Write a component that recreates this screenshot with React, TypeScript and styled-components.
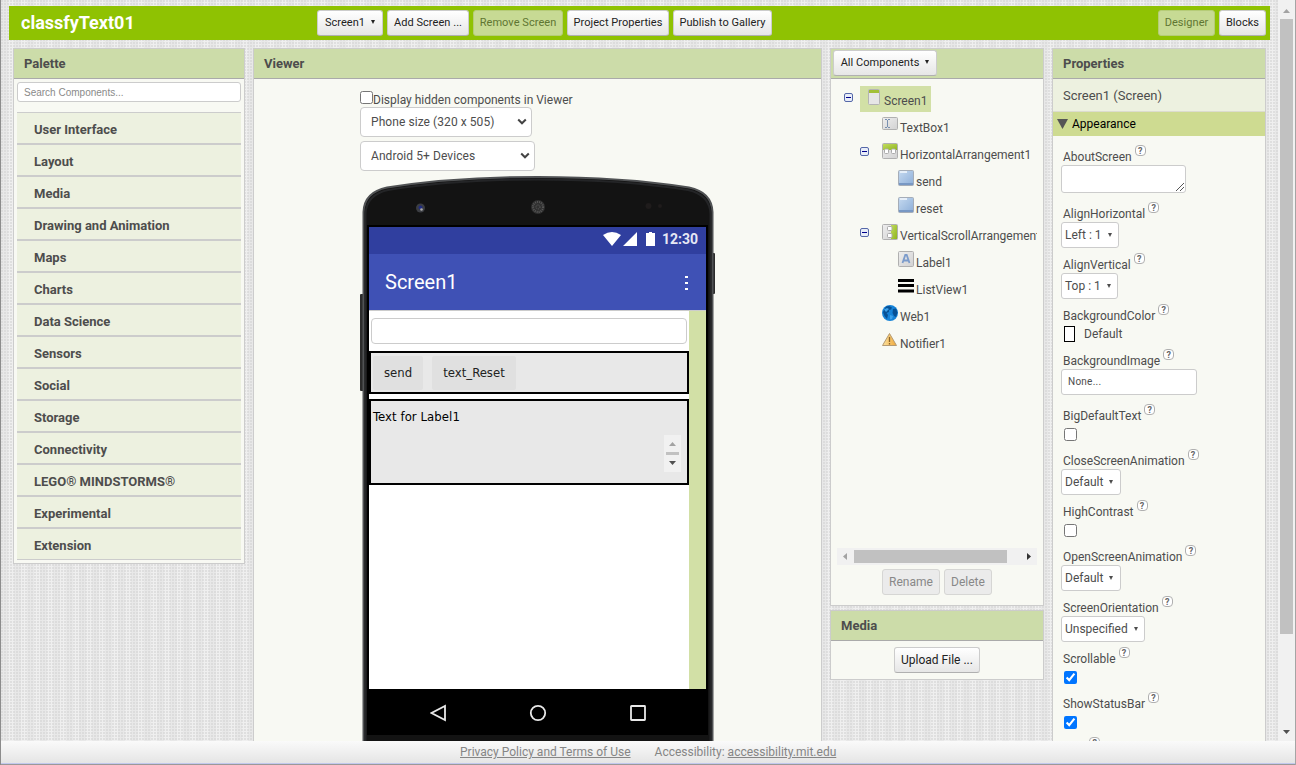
import React from 'react';
import styled, { createGlobalStyle, css } from 'styled-components';

const GlobalStyle = createGlobalStyle`
  * { box-sizing: border-box; }
  body {
    margin: 0;
    overflow: hidden;
    font-family: Roboto, "Liberation Sans", sans-serif;
    font-size: 12px;
    color: #4d4d4d;
  }
`;

const Page = styled.div`
  width: 1296px;
  height: 765px;
  display: flex;
  flex-direction: column;
  border-left: 1px solid #8c8c8c;
  border-right: 1px solid #a5a5a5;
  overflow: hidden;
`;

const Main = styled.div`
  height: 741px;
  display: flex;
  flex: none;
`;

const Workspace = styled.div`
  width: 1277px;
  padding: 6px 8px 0;
  overflow: hidden;
  background-color: #ececec;
  background-image:
    radial-gradient(circle at 1px 1px, #d4d4d4 0.5px, transparent 1px),
    repeating-linear-gradient(90deg, #e8e8e8 0 7px, #efefef 7px 13px);
  background-size: 3px 3px, auto;
`;

const TopBar = styled.header`
  height: 34px;
  background: #8fc202;
  display: flex;
  align-items: center;
  padding: 0 4px 0 12px;
`;

const ProjectName = styled.h1`
  margin: 0;
  width: 296px;
  font-size: 18px;
  font-weight: 700;
  line-height: 32px;
  color: #fff;
`;

const ButtonGroup = styled.div<{ $end?: boolean }>`
  display: flex;
  gap: 4px;
  margin-left: ${p => (p.$end ? 'auto' : '0')};
`;

const Button = styled.button<{ $w: number; $look?: 'pressed' | 'disabled'; $large?: boolean }>`
  width: ${p => p.$w}px;
  height: 26px;
  padding: 0 0 1px;
  flex: none;
  font: ${p => (p.$large ? '12px' : '11px')} Roboto, sans-serif;
  letter-spacing: ${p => (p.$large ? '0' : '0.05px')};
  white-space: nowrap;
  color: #222;
  border: 1px solid #ccc;
  border-bottom-color: #b0b0b0;
  border-radius: 3px;
  background: linear-gradient(#fff, #e6e6e6);
  ${p => p.$look === 'pressed' && css`
    color: #5f7632;
    background: #c7da94;
    border-color: #b5cc77;
  `}
  ${p => p.$look === 'disabled' && css`
    color: #888;
    background: #ebebeb;
    border-color: #d6d6d4;
  `}
`;

const Caret = styled.span`
  display: inline-block;
  margin-left: 6px;
  border: 2.5px solid transparent;
  border-top: 4px solid currentColor;
  border-bottom: 0;
  vertical-align: 2px;
`;

const Columns = styled.div`
  display: flex;
  align-items: flex-start;
  gap: 8px;
  padding: 8px 4px 0;
`;

const Stack = styled.div`
  display: flex;
  flex-direction: column;
  gap: 4px;
`;

const Panel = styled.section<{ $w: number; $h: number }>`
  width: ${p => p.$w}px;
  height: ${p => p.$h}px;
  flex: none;
  border: 1px solid #ccc;
  background: #f8f9f3;
  overflow: hidden;
`;

const PanelTitle = styled.h2<{ $bare?: boolean }>`
  margin: 0;
  display: flex;
  align-items: flex-start;
  height: 30px;
  padding: ${p => (p.$bare ? '1px 2px' : '0 10px')};
  line-height: 29px;
  font-size: 13px;
  font-weight: 700;
  color: #4d4d4d;
  background: #ccdca9;
  border-bottom: 1px solid #aaa;
`;

const Search = styled.input`
  display: block;
  width: 224px;
  height: 20px;
  margin: 3px 3px 10px;
  padding: 0 6px;
  font: 10px "Liberation Sans", sans-serif;
  border: 1px solid #ccc;
  border-radius: 3px;
  &::placeholder { color: #8a8a8a; }
`;

const Drawer = styled.div`
  width: 224px;
  height: 32px;
  margin-left: 3px;
  padding: 2px 0 0 17px;
  line-height: 29px;
  font-size: 13px;
  font-weight: 700;
  background: #edf1e0;
  border-top: 1px solid #ccc;
  border-bottom: 1px solid #ccc;
`;

const ViewerBody = styled.div`
  padding: 12px 0 0 106px;
`;

const HiddenToggle = styled.label`
  display: flex;
  height: 16px;
  line-height: 19px;
`;

const Check = styled.input`
  width: 13px;
  height: 13px;
  margin: 0;
  flex: none;
`;

const SizeSelect = styled.div<{ $w: number; $gap: number }>`
  width: ${p => p.$w}px;
  height: 30px;
  margin-bottom: ${p => p.$gap}px;
  padding: 0 4px 1px 10px;
  display: flex;
  align-items: center;
  justify-content: space-between;
  letter-spacing: 0.07px;
  background: #fff;
  border: 1px solid #ccc;
  border-radius: 4px;
`;

const Phone = styled.div`
  position: relative;
  width: 356px;
  height: 570px;
  padding: 51px 10px 0 9px;
`;

const PhoneCase = styled.svg`
  position: absolute;
  left: 0;
  top: 0;
`;

const Screen = styled.div`
  position: relative;
  width: 337px;
`;

const StatusBar = styled.div`
  height: 27px;
  padding: 0 8px 3px 0;
  display: flex;
  align-items: center;
  justify-content: flex-end;
  background: #303f9f;
  color: #e6e8f5;
  font-size: 14px;
  font-weight: 700;
`;

const StatusIcons = styled.svg`
  margin-right: 6px;
`;

const AppBar = styled.div`
  height: 56px;
  padding: 0 16px;
  display: flex;
  align-items: center;
  justify-content: space-between;
  background: #3f51b5;
  color: #fff;
  font-size: 20px;
  svg { margin-top: 2px; }
`;

const Form = styled.div`
  height: 379px;
  padding: 7px 17px 0 0;
  border-top: 1px solid #ccc;
  background: linear-gradient(90deg, #fff 320px, #d2e0a6 320px);
  font-family: "DejaVu Sans Condensed", "DejaVu Sans", sans-serif;
  font-stretch: condensed;
  font-size: 13px;
  color: #000;
`;

const MockInput = styled.div`
  height: 26px;
  margin: 0 2px 7px;
  border: 1px solid #ccc;
  border-radius: 4px;
`;

const Arrangement = styled.div<{ $h: number }>`
  height: ${p => p.$h}px;
  margin-bottom: 5px;
  padding: 3px 0 2px 2px;
  display: flex;
  background: #e8e8e8;
  border: 2px solid #000;
`;

const MockButton = styled.div<{ $w: number }>`
  width: ${p => p.$w}px;
  height: 34px;
  margin-right: 9px;
  line-height: 33px;
  text-align: center;
  color: #222;
  background: #e0e0e0;
  border-radius: 2px;
`;

const MockLabel = styled.div`
  flex: 1;
  padding-top: 5px;
  letter-spacing: 0.07px;
`;

const MiniScroll = styled.svg`
  margin: 31px 6px 0 0;
`;

const NavBar = styled.div`
  height: 48px;
  display: flex;
  justify-content: center;
  align-items: center;
`;

const Tree = styled.div`
  height: 469px;
  margin: 0 6px;
  padding-top: 7px;
  overflow: hidden;
`;

const TreeRow = styled.div<{ $level: number }>`
  height: 27px;
  display: flex;
  padding-left: ${p => 7 + p.$level * 16}px;
`;

const TreeToggle = styled.div`
  width: 16px;
  padding-top: 7px;
  flex: none;
`;

const TreeItem = styled.div<{ $on?: boolean }>`
  height: 26px;
  display: flex;
  gap: 2px;
  padding: 3px 4px 0 6px;
  line-height: 25px;
  white-space: nowrap;
  background: ${p => (p.$on ? '#d2e0a6' : 'transparent')};
  svg { flex: none; }
`;

const HScroll = styled.div`
  width: 200px;
  height: 17px;
  margin: 0 6px 4px;
  display: flex;
  align-items: center;
  background: #f1f1f1;
  svg { flex: none; }
`;

const HThumb = styled.div`
  width: 153px;
  height: 13px;
  margin-right: auto;
  background: #c1c1c1;
`;

const CenterRow = styled.div`
  display: flex;
  justify-content: center;
  gap: 4px;
`;

const UploadArea = styled(CenterRow)`
  padding-top: 6px;
`;

const Selected = styled.div`
  height: 33px;
  padding-left: 10px;
  line-height: 34px;
  font-size: 13px;
  background: #edf1e0;
  border-bottom: 1px solid #dcdccf;
`;

const Category = styled.div`
  height: 24px;
  display: flex;
  align-items: center;
  gap: 4px;
  padding-left: 4px;
  margin-bottom: 8px;
  background: #cedb91;
  color: #000;
`;

const Property = styled.div<{ $h: number }>`
  height: ${p => p.$h}px;
  padding-left: 8px;
`;

const PropertyName = styled.div`
  height: 21px;
  padding-left: 2px;
  display: flex;
  gap: 3px;
  line-height: 27px;
`;

const Help = styled.span`
  width: 11px;
  height: 11px;
  margin-top: 1px;
  border: 1px solid #b0b0b0;
  border-radius: 4px;
  background: #fff;
  text-align: center;
  font: bold 9px/10px Roboto, sans-serif;
  color: #666;
`;

const Picker = styled.div<{ $w: number }>`
  width: ${p => p.$w}px;
  height: 26px;
  padding-left: 3px;
  line-height: 25px;
  white-space: nowrap;
  background: #fff;
  border: 1px solid #ccc;
  border-radius: 3px;
`;

const AssetBox = styled(Picker)`
  padding-left: 6px;
  line-height: 24px;
  font-size: 10px;
  letter-spacing: 0.25px;
`;

const TextArea = styled.div`
  width: 125px;
  height: 28px;
  display: flex;
  justify-content: flex-end;
  align-items: flex-end;
  background: #fff;
  border: 1px solid #ccc;
  border-radius: 3px;
`;

const ColorRow = styled.div`
  display: flex;
  gap: 9px;
  padding: 2px 3px;
  line-height: 16px;
`;

const Swatch = styled.span`
  width: 11px;
  height: 16px;
  background: #fff;
  border: 1px solid #000;
`;

const PropertyCheck = styled(Check)`
  display: block;
  margin: 4px 3px;
`;

const VScroll = styled.div`
  width: 17px;
  height: 741px;
  padding: 4px 2px 5px;
  display: flex;
  flex-direction: column;
  align-items: center;
  background: #f1f1f1;
`;

const VThumb = styled.div`
  width: 13px;
  height: 615px;
  margin: 0 0 auto;
  background: #c1c1c1;
`;

const Footer = styled.footer`
  height: 24px;
  padding-left: 459px;
  display: flex;
  gap: 24px;
  line-height: 23px;
  color: #858585;
  background: linear-gradient(#fafafa, #e4e4e4);
  border-bottom: 1px solid #999;
  box-shadow: inset 0 -1px 0 #c2c8ee;
  a { color: inherit; text-decoration: underline; }
`;

const DRAWERS = [
  'User Interface', 'Layout', 'Media', 'Drawing and Animation', 'Maps', 'Charts', 'Data Science',
  'Sensors', 'Social', 'Storage', 'Connectivity', 'LEGO® MINDSTORMS®', 'Experimental', 'Extension',
];

type IconName = 'screen' | 'textbox' | 'horizontal' | 'button' | 'vertical' | 'label' | 'list' | 'web' | 'notifier';

const NODES: { name: string; icon: IconName; level: number; open?: boolean }[] = [
  { name: 'Screen1', icon: 'screen', level: 0, open: true },
  { name: 'TextBox1', icon: 'textbox', level: 1 },
  { name: 'HorizontalArrangement1', icon: 'horizontal', level: 1, open: true },
  { name: 'send', icon: 'button', level: 2 },
  { name: 'reset', icon: 'button', level: 2 },
  { name: 'VerticalScrollArrangement1', icon: 'vertical', level: 1, open: true },
  { name: 'Label1', icon: 'label', level: 2 },
  { name: 'ListView1', icon: 'list', level: 2 },
  { name: 'Web1', icon: 'web', level: 1 },
  { name: 'Notifier1', icon: 'notifier', level: 1 },
];

type Prop = { name: string; h: number; kind: 'area' | 'pick' | 'color' | 'asset' | 'check'; value?: string; w?: number; on?: boolean };

const PROPS: Prop[] = [
  { name: 'AboutScreen', h: 57, kind: 'area' },
  { name: 'AlignHorizontal', h: 51, kind: 'pick', value: 'Left : 1', w: 58 },
  { name: 'AlignVertical', h: 51, kind: 'pick', value: 'Top : 1', w: 57 },
  { name: 'BackgroundColor', h: 45, kind: 'color', value: 'Default' },
  { name: 'BackgroundImage', h: 55, kind: 'asset', value: 'None...', w: 136 },
  { name: 'BigDefaultText', h: 45, kind: 'check' },
  { name: 'CloseScreenAnimation', h: 51, kind: 'pick', value: 'Default', w: 60 },
  { name: 'HighContrast', h: 45, kind: 'check' },
  { name: 'OpenScreenAnimation', h: 51, kind: 'pick', value: 'Default', w: 60 },
  { name: 'ScreenOrientation', h: 51, kind: 'pick', value: 'Unspecified', w: 84 },
  { name: 'Scrollable', h: 45, kind: 'check', on: true },
  { name: 'ShowStatusBar', h: 45, kind: 'check', on: true },
  { name: 'Title', h: 45, kind: 'area' },
];

function Icon({ name }: { name: IconName }) {
  const frame = { x: 0.5, y: 1.5, width: 15, height: 13, rx: 1, stroke: '#b0b0b0', fill: 'url(#grey)' };
  return (
    <svg width="16" height="16" viewBox="0 0 16 16">
      <defs>
        <linearGradient id="grey" x1="0" y1="0" x2="1" y2="1">
          <stop offset="0" stopColor="#eee" /><stop offset="1" stopColor="#d2d2d2" />
        </linearGradient>
        <linearGradient id="green" x1="0" y1="0" x2="1" y2="1">
          <stop offset="0" stopColor="#c2dc5e" /><stop offset="1" stopColor="#8fb51e" />
        </linearGradient>
        <linearGradient id="blue" x1="0" y1="0" x2="1" y2="1">
          <stop offset="0" stopColor="#c6daf0" /><stop offset="1" stopColor="#8caed8" />
        </linearGradient>
        <linearGradient id="amber" x1="0" x2="1">
          <stop offset="0" stopColor="#fbe3a0" /><stop offset="1" stopColor="#f0a738" />
        </linearGradient>
      </defs>
      {name === 'screen' && <>
        <rect x="2.5" y="0.5" width="11" height="15" rx="1" fill="#e6e6e6" stroke="#b4b4b4" />
        <path d="M3 1h10v3H3z" fill="#a2c037" />
      </>}
      {name === 'textbox' && <>
        <rect {...frame} height={12} />
        <path d="M3 3.5h2m1 0h2M5.5 4v7M3 11.5h2m1 0h2" stroke="#7890b0" fill="none" />
      </>}
      {name === 'horizontal' && <>
        <rect {...frame} y={0.5} height={15} />
        <path d="M1 1h14v6H1z" fill="url(#green)" />
        <rect x="2.5" y="6" width="4" height="4.5" rx="1" fill="#fff" stroke="#aaa" />
        <rect x="9.5" y="6" width="4" height="4.5" rx="1" fill="#fff" stroke="#aaa" />
      </>}
      {name === 'vertical' && <>
        <rect {...frame} y={0.5} height={15} />
        <path d="M9 1h6v14H9z" fill="url(#green)" />
        <rect x="5.5" y="2.5" width="4.5" height="4" rx="1" fill="#fff" stroke="#aaa" />
        <rect x="5.5" y="9.5" width="4.5" height="4" rx="1" fill="#fff" stroke="#aaa" />
      </>}
      {name === 'button' && <>
        <rect x="0.5" y="0.5" width="15" height="15" rx="1" fill="url(#blue)" stroke="#a5adb8" />
        <path d="M2 1h7v2H2z" fill="#e6eff9" />
        <path d="M1 14h14" stroke="#7898c4" strokeWidth="2" />
      </>}
      {name === 'label' && <>
        <rect {...frame} y={0.5} height={15} />
        <path d="M4.5 12 7.3 4h1.4l2.8 8M5.5 9.5h5" fill="none" stroke="#7b9bcb" strokeWidth="1.8" />
      </>}
      {name === 'list' && <path d="M0 2.5h16M0 7.5h16M0 13h16" stroke="#000" strokeWidth="3" />}
      {name === 'web' && <>
        <circle cx="8" cy="8" r="8" fill="#1683d8" />
        <path d="M4 1.5 7 1l3 1.5-1 2-2 .5v2L4.5 8 6 10l-1 4-2.5-3L1 7z" fill="#075195" />
        <path d="m11 4 3-.5 1.5 4L14 12l-2-1-1.500-3z" fill="#075195" />
        <path d="M2 4.500 5 3l2 1-3 3zM8 10l3 1-1 3-2 .5z" fill="#3da2ea" />
      </>}
      {name === 'notifier' && <>
        <path d="M7.500 1.500 14.500 13.500H.5z" fill="url(#amber)" stroke="#b49a72" strokeLinejoin="round" />
        <path d="M7.500 5v5M7.500 11v1.500" stroke="#8a6327" strokeWidth="1.300" />
      </>}
    </svg>
  );
}

const ToggleBox = styled.svg`
  display: block;
`;

function Toggle() {
  return (
    <ToggleBox width="9" height="9" viewBox="0 0 9 9">
      <rect x="0.5" y="0.5" width="8" height="8" rx="1.5" fill="#e8edf8" stroke="#5568a8" />
      <path d="M2 4.500h5" stroke="#00008b" />
    </ToggleBox>
  );
}

function Chevron() {
  return (
    <svg width="10" height="7" viewBox="0 0 10 7">
      <path d="m1.200 1.500 3.800 3.800 3.800-3.800" fill="none" stroke="#444" strokeWidth="2" />
    </svg>
  );
}

function Case() {
  return (
    <PhoneCase width="356" height="570" viewBox="0 0 356 570">
      <rect x="0" y="118" width="5" height="97" rx="1" fill="#2b2b2b" />
      <rect x="350" y="77" width="5" height="41" rx="1" fill="#2b2b2b" />
      <path d="M3.500 570V36C4 24 10 15 27 11.500C72 4.500 120 1 178 1C236 1 285 4.500 329 11.500C346 15 352 24 352.500 36V570" fill="#131313" stroke="#505254" strokeWidth="2" />
      <path d="M5.500 570V38C6 26 12 17.500 28 14C72 7 120 3.500 178 3.500C236 3.500 284 7 328 14C344 17.500 350 26 350.500 38V570" fill="none" stroke="#242527" strokeWidth="2" />
      <rect x="7" y="49" width="341" height="510" fill="#000" />
      <circle cx="60.500" cy="32" r="4.500" fill="#3b3d42" />
      <circle cx="60.500" cy="31.500" r="2" fill="#202c80" />
      <circle cx="61.500" cy="33.500" r="1.300" fill="#aaa" />
      <circle cx="178" cy="31" r="7" fill="#303030" />
      <circle cx="178" cy="31" r="5" fill="none" stroke="#575757" strokeWidth="2" strokeDasharray="1 1" />
      <circle cx="178" cy="31" r="2" fill="none" stroke="#606060" strokeDasharray="1 1" />
      <circle cx="288.500" cy="30" r="3" fill="#1f1c1c" />
      <circle cx="300" cy="30" r="2" fill="#1f1c1c" />
    </PhoneCase>
  );
}

function Editor({ prop }: { prop: Prop }) {
  switch (prop.kind) {
    case 'area':
      return (
        <TextArea>
          <svg width="10" height="10" viewBox="0 0 10 10"><path d="M1 9 9 1M5 9l4-4" stroke="#555" /></svg>
        </TextArea>
      );
    case 'color':
      return <ColorRow><Swatch />{prop.value}</ColorRow>;
    case 'asset':
      return <AssetBox $w={prop.w!}>{prop.value}</AssetBox>;
    case 'check':
      return <PropertyCheck type="checkbox" defaultChecked={prop.on} />;
    default:
      return <Picker $w={prop.w!}>{prop.value}<Caret /></Picker>;
  }
}

export default function App() {
  return (
    <Page>
      <GlobalStyle />
      <Main>
        <Workspace>
          <TopBar>
            <ProjectName>classfyText01</ProjectName>
            <ButtonGroup>
              <Button $w={66}>Screen1<Caret /></Button>
              <Button $w={82}>Add Screen ...</Button>
              <Button $w={90} $look="pressed">Remove Screen</Button>
              <Button $w={102}>Project Properties</Button>
              <Button $w={99}>Publish to Gallery</Button>
            </ButtonGroup>
            <ButtonGroup $end>
              <Button $w={57} $look="pressed">Designer</Button>
              <Button $w={47}>Blocks</Button>
            </ButtonGroup>
          </TopBar>
          <Columns>
            <Panel $w={232} $h={516}>
              <PanelTitle>Palette</PanelTitle>
              <Search placeholder="Search Components..." />
              {DRAWERS.map(d => <Drawer key={d}>{d}</Drawer>)}
            </Panel>
            <Panel $w={569} $h={710}>
              <PanelTitle>Viewer</PanelTitle>
              <ViewerBody>
                <HiddenToggle><Check type="checkbox" />Display hidden components in Viewer</HiddenToggle>
                <SizeSelect $w={172} $gap={4}>Phone size (320 x 505)<Chevron /></SizeSelect>
                <SizeSelect $w={175} $gap={5}>Android 5+ Devices<Chevron /></SizeSelect>
                <Phone>
                  <Case />
                  <Screen>
                    <StatusBar>
                      <StatusIcons width="53" height="14" viewBox="0 0 53 14">
                        <path d="M0 3Q9-3 18 3L9 14zM20 14 34 0v14zM43 1h3V0h3v1h3v13h-9z" fill="#fff" />
                      </StatusIcons>
                      12:30
                    </StatusBar>
                    <AppBar>
                      Screen1
                      <svg width="7" height="16" viewBox="0 0 7 16"><path d="M2 1h3v2H2zM2 7h3v2H2zM2 13h3v2H2z" fill="#fff" /></svg>
                    </AppBar>
                    <Form>
                      <MockInput />
                      <Arrangement $h={43}>
                        <MockButton $w={50}>send</MockButton>
                        <MockButton $w={84}>text_Reset</MockButton>
                      </Arrangement>
                      <Arrangement $h={86}>
                        <MockLabel>Text for Label1</MockLabel>
                        <MiniScroll width="17" height="37" viewBox="0 0 17 37">
                          <path d="M0 0h17v37H0z" fill="#f1f1f1" />
                          <path d="m5 11 3.500-4 3.500 4z" fill="#a3a3a3" />
                          <path d="M2 17h13v3H2z" fill="#c1c1c1" />
                          <path d="m5 26 3.500 4 3.500-4z" fill="#505050" />
                        </MiniScroll>
                      </Arrangement>
                    </Form>
                    <NavBar>
                      <svg width="216" height="18" viewBox="0 0 216 18" fill="none" stroke="#e8e8e8" strokeWidth="1.800">
                        <path d="M15 2v14L1.500 9z" />
                        <circle cx="108" cy="9" r="7.200" />
                        <rect x="201" y="2" width="14" height="14" rx="0.500" />
                      </svg>
                    </NavBar>
                  </Screen>
                </Phone>
              </ViewerBody>
            </Panel>
            <Stack>
              <Panel $w={214} $h={558}>
                <PanelTitle $bare><Button $w={104}>All Components<Caret /></Button></PanelTitle>
                <Tree>
                  {NODES.map(n => (
                    <TreeRow key={n.name} $level={n.level}>
                      <TreeToggle>{n.open && <Toggle />}</TreeToggle>
                      <TreeItem $on={n.level === 0}><Icon name={n.icon} />{n.name}</TreeItem>
                    </TreeRow>
                  ))}
                </Tree>
                <HScroll>
                  <svg width="17" height="17" viewBox="0 0 17 17"><path d="M10 5v7L6 8.500z" fill="#a3a3a3" /></svg>
                  <HThumb />
                  <svg width="17" height="17" viewBox="0 0 17 17"><path d="M7 5v7l4-3.500z" fill="#333" /></svg>
                </HScroll>
                <CenterRow>
                  <Button $w={58} $large $look="disabled">Rename</Button>
                  <Button $w={48} $large $look="disabled">Delete</Button>
                </CenterRow>
              </Panel>
              <Panel $w={214} $h={70}>
                <PanelTitle>Media</PanelTitle>
                <UploadArea><Button $w={86} $large>Upload File ...</Button></UploadArea>
              </Panel>
            </Stack>
            <Panel $w={214} $h={710}>
              <PanelTitle>Properties</PanelTitle>
              <Selected>Screen1 (Screen)</Selected>
              <Category>
                <svg width="11" height="10" viewBox="0 0 11 10"><path d="M0 0h11L5.500 10z" fill="#555" /></svg>
                Appearance
              </Category>
              {PROPS.map(p => (
                <Property key={p.name} $h={p.h}>
                  <PropertyName>{p.name}<Help>?</Help></PropertyName>
                  <Editor prop={p} />
                </Property>
              ))}
            </Panel>
          </Columns>
        </Workspace>
        <VScroll>
          <svg width="13" height="15" viewBox="0 0 13 15"><path d="m3 9 3.500-4L10 9z" fill="#a3a3a3" /></svg>
          <VThumb />
          <svg width="13" height="9" viewBox="0 0 13 9"><path d="m3 3 3.500 4L10 3z" fill="#505050" /></svg>
        </VScroll>
      </Main>
      <Footer>
        <a>Privacy Policy and Terms of Use</a>
        <span>Accessibility: <a>accessibility.mit.edu</a></span>
      </Footer>
    </Page>
  );
}
